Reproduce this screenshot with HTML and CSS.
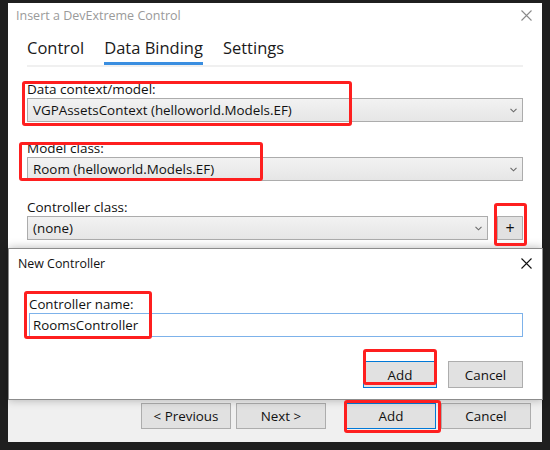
FILE: index.html
```html
<!DOCTYPE html>
<html>
<head>
<meta charset="utf-8">
<link rel="stylesheet" href="styles.css">
</head>
<body>
<div class="window">
  <div class="titlebar">
    <span class="title">Insert a DevExtreme Control</span>
    <svg class="close-x" width="11" height="11" viewBox="0 0 11 11"><path d="M0.5 0.5 L10.5 10.5 M10.5 0.5 L0.5 10.5" stroke="#8a8a8a" stroke-width="1.1" fill="none"/></svg>
  </div>
  <div class="tabs">
    <span class="tab">Control</span>
    <span class="tab active">Data Binding</span>
    <span class="tab">Settings</span>
  </div>
  <div class="form">
    <div class="field">
      <div class="label">Data context/model:</div>
      <div class="select"><span>VGPAssetsContext (helloworld.Models.EF)</span><svg class="chev" width="7" height="5" viewBox="0 0 7 5"><path d="M0.5 0.8 L3.5 3.8 L6.5 0.8" stroke="#6a6a6a" stroke-width="1.1" fill="none"/></svg></div>
    </div>
    <div class="field">
      <div class="label">Model class:</div>
      <div class="select"><span>Room (helloworld.Models.EF)</span><svg class="chev" width="7" height="5" viewBox="0 0 7 5"><path d="M0.5 0.8 L3.5 3.8 L6.5 0.8" stroke="#6a6a6a" stroke-width="1.1" fill="none"/></svg></div>
    </div>
    <div class="field">
      <div class="label">Controller class:</div>
      <div class="row">
        <div class="select grow"><span>(none)</span><svg class="chev" width="7" height="5" viewBox="0 0 7 5"><path d="M0.5 0.8 L3.5 3.8 L6.5 0.8" stroke="#6a6a6a" stroke-width="1.1" fill="none"/></svg></div>
        <div class="plus">+</div>
      </div>
    </div>
  </div>
  <div class="footer">
    <div class="btn wide">&lt; Previous</div>
    <div class="btn wide gap5">Next &gt;</div>
    <div class="btn wide default gap20">Add</div>
    <div class="btn wide gap5">Cancel</div>
  </div>

  <div class="dialog">
    <div class="dlg-title">
      <span>New Controller</span>
      <svg width="11" height="11" viewBox="0 0 11 11"><path d="M0.5 0.5 L10.5 10.5 M10.5 0.5 L0.5 10.5" stroke="#111" stroke-width="1.1" fill="none"/></svg>
    </div>
    <div class="dlg-body">
      <div class="label">Controller name:</div>
      <div class="input">RoomsController</div>
      <div class="dlg-buttons">
        <div class="btn add default">Add</div>
        <div class="btn cancel">Cancel</div>
      </div>
    </div>
  </div>
</div>

<div class="mark m1"></div>
<div class="mark m2"></div>
<div class="mark m3"></div>
<div class="mark m4"></div>
<div class="mark m5"></div>
<div class="mark m6"></div>
</body>
</html>
```

FILE: styles.css
```css
html, body {
  margin: 0;
  padding: 0;
}
body {
  width: 550px;
  height: 450px;
  overflow: hidden;
  background: #1f1f1f;
  font-family: "Open Sans", "Noto Sans", sans-serif;
  color: #111;
  position: relative;
}
.window {
  position: relative;
  margin: 3px 0 0 8px;
  width: 534px;
  height: 439px;
  background: #fff;
  display: flex;
  flex-direction: column;
}
.titlebar {
  height: 24px;
  padding: 0 10px 0 8px;
  display: flex;
  align-items: center;
  justify-content: space-between;
}
.title {
  font-size: 12.5px;
  color: #9a9a9a;
}
.tabs {
  margin: 9px 19px 0 19px;
  display: flex;
  gap: 20px;
  border-bottom: 2px solid #f0f0f0;
}
.tab {
  font-size: 16.5px;
  line-height: 24px;
  padding-bottom: 2px;
  border-bottom: 3px solid transparent;
  color: #1a1a1a;
}
.tab.active {
  border-bottom-color: #3a8ee0;
}
.form {
  padding: 13px 19px 0 19px;
}
.field {
  margin-bottom: 17px;
}
.label {
  font-size: 13.5px;
  line-height: 18px;
  color: #111;
}
.select {
  height: 24px;
  box-sizing: border-box;
  border: 1px solid #acacac;
  background: linear-gradient(#f2f2f2, #e6e6e6);
  padding: 0 5px 0 5px;
  display: flex;
  align-items: center;
  justify-content: space-between;
  font-size: 13.4px;
}
.row {
  display: flex;
  gap: 9px;
}
.grow {
  flex: 1;
}
.plus {
  width: 26px;
  height: 24px;
  box-sizing: border-box;
  border: 1px solid #adadad;
  background: #e1e1e1;
  display: flex;
  align-items: center;
  justify-content: center;
  font-size: 16px;
  line-height: 1;
}
.footer {
  margin-top: auto;
  height: 42px;
  box-sizing: border-box;
  background: #f0f0f0;
  display: flex;
  justify-content: flex-end;
  align-items: flex-start;
  padding: 3px 11px 0 0;
}
.btn {
  height: 26px;
  box-sizing: border-box;
  border: 1px solid #adadad;
  background: #e1e1e1;
  display: flex;
  align-items: center;
  justify-content: center;
  font-size: 13.4px;
  color: #111;
}
.btn.wide { width: 90px; }
.btn.default { border-color: #0078d7; }
.gap5 { margin-left: 5px; }
.gap20 { margin-left: 20px; }

.dialog {
  position: absolute;
  left: 0;
  top: 245px;
  width: 535px;
  height: 152px;
  box-sizing: border-box;
  border: 1px solid #8c8c8c;
  background: #fff;
  box-shadow: 0 0 9px rgba(0, 0, 0, 0.28);
}
.dlg-title {
  height: 28px;
  padding: 0 10px 0 9px;
  display: flex;
  align-items: center;
  justify-content: space-between;
  font-size: 12.4px;
  color: #111;
}
.dlg-body {
  padding: 18px 19px 0 20px;
}
.dlg-body .label {
  font-size: 13.3px;
}
.input {
  height: 24px;
  box-sizing: border-box;
  border: 1px solid #7db2ea;
  padding-left: 3px;
  display: flex;
  align-items: center;
  font-size: 13.3px;
}
.dlg-buttons {
  margin-top: 24px;
  display: flex;
  justify-content: flex-end;
  gap: 11px;
}
.dlg-buttons .btn { height: 27px; }
.btn.add { width: 74px; }
.btn.cancel { width: 75px; }

.mark {
  position: absolute;
  box-sizing: border-box;
  border: 3px solid #fe1f1f;
  border-radius: 3px;
}
.m1 { left: 22px; top: 81px; width: 330px; height: 45px; }
.m2 { left: 19px; top: 142px; width: 244px; height: 39px; }
.m3 { left: 494px; top: 203px; width: 33px; height: 43px; }
.m4 { left: 24px; top: 291px; width: 128px; height: 48px; }
.m5 { left: 363px; top: 349px; width: 74px; height: 36px; }
.m6 { left: 344px; top: 400px; width: 97px; height: 33px; }
```
